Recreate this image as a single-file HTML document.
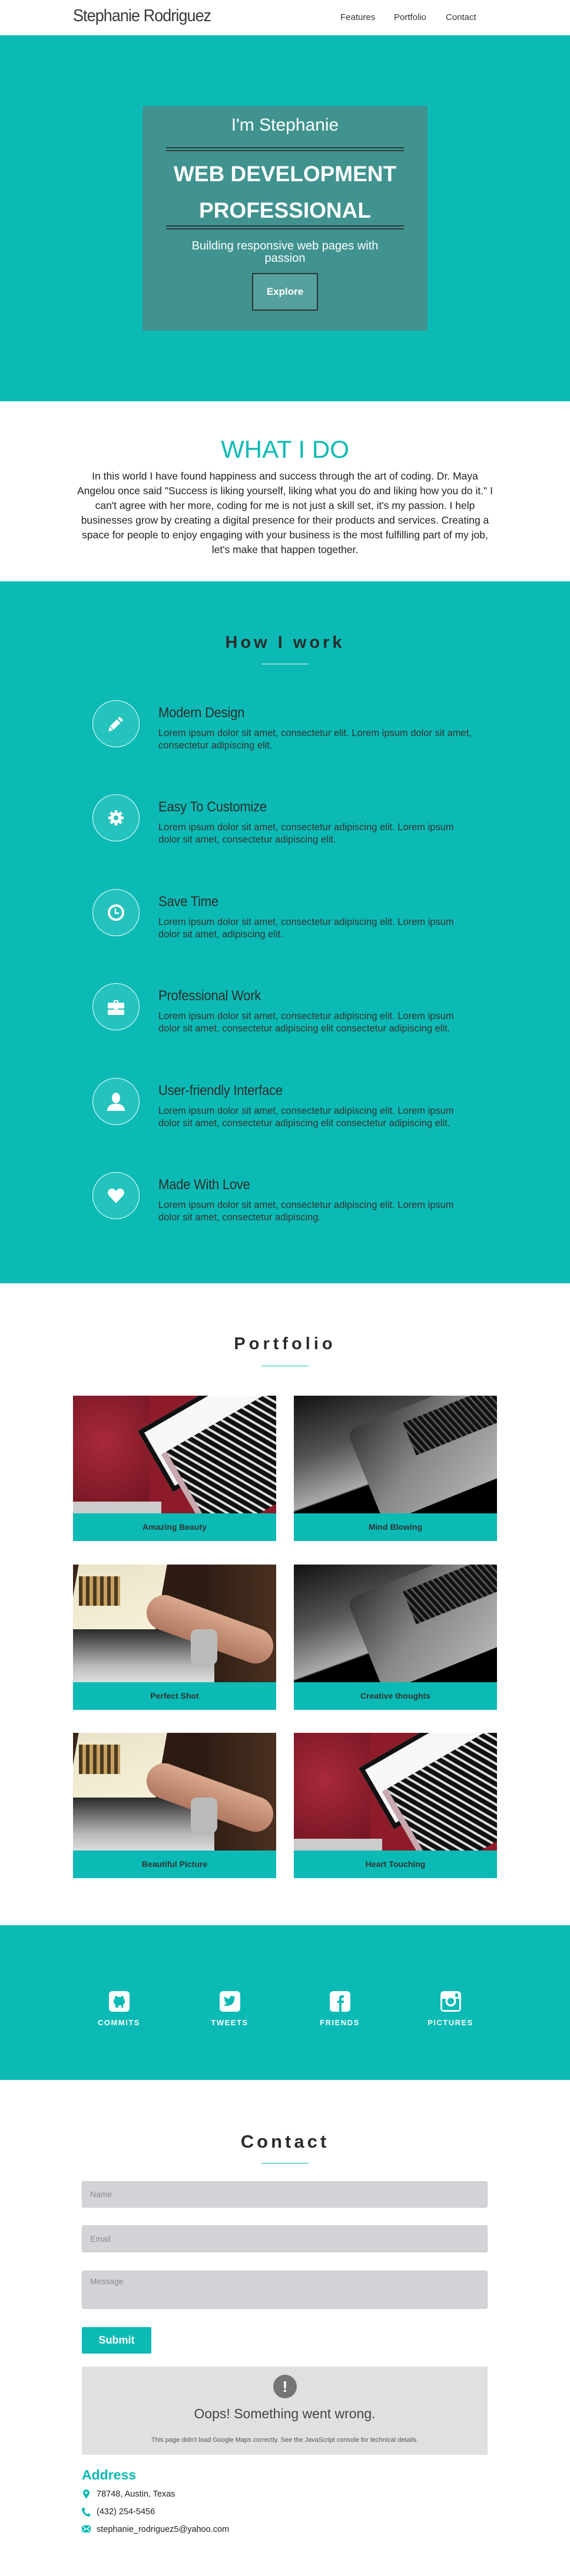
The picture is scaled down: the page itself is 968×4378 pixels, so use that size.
<!DOCTYPE html>
<html><head><meta charset="utf-8">
<style>
*{margin:0;padding:0;box-sizing:border-box}
body{width:968px;height:4378px;position:relative;background:#fff;font-family:"Liberation Sans",sans-serif;color:#333;overflow:hidden}
.a{position:absolute}
.teal{background:#0bbab5}
.c{text-align:center}
.nav a{position:absolute;top:21px;font-size:15px;color:#333;text-decoration:none}
.circ{position:absolute;left:157px;width:80px;height:80px;border-radius:50%;border:1.5px solid #fff;background:#24c3be;display:flex;align-items:center;justify-content:center}
.it h3{position:absolute;left:269px;font-weight:normal;font-size:24px;color:#2d2d2d;letter-spacing:-0.3px;transform:scaleX(.92);transform-origin:left}
.it p{position:absolute;left:269px;width:600px;font-size:16.5px;line-height:20.5px;color:#333;white-space:nowrap}
.card{position:absolute;width:345px;height:247px}
.card .img{height:200px;overflow:hidden;position:relative}
.card .cap{height:47px;background:#0bbab5;text-align:center;line-height:47px;font-size:14px;font-weight:bold;color:#333}
.soc{position:absolute;top:3384px;width:120px;text-align:center}
.soc svg{display:block;margin:0 auto}
.soc div{margin-top:11px;font-size:13px;font-weight:bold;color:#fff;letter-spacing:1.5px}
.inp{position:absolute;left:139px;width:689px;background:#d3d4d7;border:1px solid #c6c7ca;border-radius:3px;font-size:14px;color:#8a8a8a;padding-left:13px}
.h2{position:absolute;left:0;width:968px;text-align:center;font-weight:bold;color:#2b2b2b}
</style></head><body>

<!-- NAV -->
<div class="a" style="left:0;top:0;width:968px;height:60px;background:#fff">
<div class="a" style="left:124px;top:11px;font-size:29px;font-weight:300;color:#3a3a3a;letter-spacing:-1px;transform:scaleX(.93);transform-origin:left">Stephanie Rodriguez</div>
<div class="nav"><a style="left:578px">Features</a><a style="left:669px">Portfolio</a><a style="left:757px">Contact</a></div>
</div>

<!-- HERO -->
<div class="a teal" style="left:0;top:60px;width:968px;height:622px"></div>
<div class="a" style="left:242px;top:180px;width:484px;height:382px;background:#40938f"></div>
<div class="a c" style="left:242px;top:196px;width:484px;font-size:30px;color:#fff">I'm Stephanie</div>
<div class="a" style="left:282px;top:250px;width:404px;height:7px;border-top:2px solid #2e3b3a;border-bottom:2px solid #2e3b3a"></div>
<div class="a c" style="left:242px;top:265px;width:484px;font-size:37px;font-weight:bold;color:#fff;line-height:62px">WEB DEVELOPMENT<br>PROFESSIONAL</div>
<div class="a" style="left:282px;top:383px;width:404px;height:7px;border-top:2px solid #2e3b3a;border-bottom:2px solid #2e3b3a"></div>
<div class="a c" style="left:299px;top:408px;width:370px;font-size:20px;line-height:21px;color:#fff">Building responsive web pages with passion</div>
<div class="a c" style="left:428px;top:464px;width:112px;height:64px;border:2px solid #2e3433;background:#56a19d;color:#fff;font-size:17px;font-weight:bold;line-height:60px">Explore</div>

<!-- WHAT I DO -->
<div class="a c" style="left:0;top:740px;width:968px;font-size:42px;color:#0bbab5;font-weight:300">WHAT I DO</div>
<div class="a c" style="left:0;top:797px;width:968px;font-size:17.5px;line-height:25px;color:#222;white-space:nowrap">In this world I have found happiness and success through the art of coding. Dr. Maya<br>Angelou once said "Success is liking yourself, liking what you do and liking how you do it." I<br>can't agree with her more, coding for me is not just a skill set, it's my passion. I help<br>businesses grow by creating a digital presence for their products and services. Creating a<br>space for people to enjoy engaging with your business is the most fulfilling part of my job,<br>let's make that happen together.</div>

<!-- HOW I WORK -->
<div class="a teal" style="left:0;top:988px;width:968px;height:1193px"></div>
<div class="h2" style="top:1076px;font-size:29px;letter-spacing:5px">How I work</div>
<div class="a" style="left:444px;top:1128px;width:80px;height:1px;background:#fff"></div>

<div class="it">
<div class="circ" style="top:1190px"><svg width="32" height="32" viewBox="0 0 32 32"><path d="M22 4l6 6-3 3-6-6z M17.5 8.5l6 6L12 26l-6-6z M5 21l6 6-8 2z" fill="#fff"/></svg></div>
<h3 style="top:1198px">Modern Design</h3>
<p style="top:1236px">Lorem ipsum dolor sit amet, consectetur elit. Lorem ipsum dolor sit amet,<br>consectetur adipiscing elit.</p>

<div class="circ" style="top:1350px"><svg width="30" height="30" viewBox="0 0 30 30"><g fill="#fff"><circle cx="15" cy="15" r="9"/><rect x="12.5" y="2" width="5" height="26" rx="1"/><rect x="12.5" y="2" width="5" height="26" rx="1" transform="rotate(45 15 15)"/><rect x="12.5" y="2" width="5" height="26" rx="1" transform="rotate(90 15 15)"/><rect x="12.5" y="2" width="5" height="26" rx="1" transform="rotate(135 15 15)"/></g><circle cx="15" cy="15" r="4" fill="#24c3be"/></svg></div>
<h3 style="top:1358px">Easy To Customize</h3>
<p style="top:1396px">Lorem ipsum dolor sit amet, consectetur adipiscing elit. Lorem ipsum<br>dolor sit amet, consectetur adipiscing elit.</p>

<div class="circ" style="top:1511px"><svg width="32" height="32" viewBox="0 0 32 32"><circle cx="16" cy="16" r="12" fill="none" stroke="#fff" stroke-width="4"/><path d="M15 9v8h6" fill="none" stroke="#fff" stroke-width="2.5"/></svg></div>
<h3 style="top:1519px">Save Time</h3>
<p style="top:1557px">Lorem ipsum dolor sit amet, consectetur adipiscing elit. Lorem ipsum<br>dolor sit amet, adipiscing elit.</p>

<div class="circ" style="top:1671px"><svg width="36" height="36" viewBox="0 0 36 36"><path d="M14 7h8v4h-2V9h-4v2h-2z" fill="#fff"/><rect x="4" y="11" width="28" height="10" rx="2" fill="#fff"/><rect x="4" y="23" width="28" height="9" rx="2" fill="#fff"/><rect x="15" y="19" width="6" height="5" fill="#fff"/></svg></div>
<h3 style="top:1679px">Professional Work</h3>
<p style="top:1717px">Lorem ipsum dolor sit amet, consectetur adipiscing elit. Lorem ipsum<br>dolor sit amet, consectetur adipiscing elit consectetur adipiscing elit.</p>

<div class="circ" style="top:1832px"><svg width="36" height="36" viewBox="0 0 36 36"><ellipse cx="18" cy="12" rx="7" ry="9" fill="#fff"/><path d="M3 34c0-8 6-11 11-12h8c5 1 11 4 11 12z" fill="#fff"/></svg></div>
<h3 style="top:1840px">User-friendly Interface</h3>
<p style="top:1878px">Lorem ipsum dolor sit amet, consectetur adipiscing elit. Lorem ipsum<br>dolor sit amet, consectetur adipiscing elit consectetur adipiscing elit.</p>

<div class="circ" style="top:1992px"><svg width="32" height="32" viewBox="0 0 32 32"><path d="M16 29L4 16C0 11 3 4 9 4c3 0 5 2 7 4 2-2 4-4 7-4 6 0 9 7 5 12z" fill="#fff"/></svg></div>
<h3 style="top:2000px">Made With Love</h3>
<p style="top:2038px">Lorem ipsum dolor sit amet, consectetur adipiscing elit. Lorem ipsum<br>dolor sit amet, consectetur adipiscing.</p>
</div>

<!-- PORTFOLIO -->
<div class="h2" style="top:2268px;font-size:29px;letter-spacing:6px">Portfolio</div>
<div class="a" style="left:444px;top:2321px;width:80px;height:1px;background:#0bbab5"></div>

<div class="card" style="left:124px;top:2372px"><div class="img" style="background:#8e1b2a">
<div class="a" style="left:0;top:0;width:130px;height:200px;background:radial-gradient(circle at 40% 40%,#a8293a,#6d1320)"></div>
<div class="a" style="left:110px;top:60px;width:300px;height:120px;background:#f7f7f7;border:8px solid #111;transform:rotate(-30deg);transform-origin:left top"></div>
<div class="a" style="left:150px;top:100px;width:260px;height:170px;background:repeating-linear-gradient(60deg,#111 0 8px,#ddd 8px 12px),#111;transform:rotate(-30deg);transform-origin:left top;border-left:10px solid #c9a9ae"></div>
<div class="a" style="left:0;top:180px;width:150px;height:20px;background:#ccc"></div></div><div class="cap">Amazing Beauty</div></div>

<div class="card" style="left:499px;top:2372px"><div class="img" style="background:linear-gradient(160deg,#111 0%,#555 35%,#aaa 60%,#000 61%,#000 100%)">
<div class="a" style="left:90px;top:60px;width:330px;height:170px;background:linear-gradient(150deg,#333 0%,#888 40%,#c8c8c8 100%);border-radius:16px;transform:rotate(-22deg);transform-origin:left top"></div>
<div class="a" style="left:190px;top:10px;width:180px;height:60px;background:repeating-linear-gradient(70deg,#111 0 6px,#555 6px 9px);transform:rotate(-22deg)"></div></div><div class="cap">Mind Blowing</div></div>

<div class="card" style="left:124px;top:2659px"><div class="img" style="background:linear-gradient(90deg,#3a2418,#2a1a12 60%,#4a3020)">
<div class="a" style="left:0;top:0;width:150px;height:110px;background:linear-gradient(160deg,#e8e4c8,#f6f0d8);transform:skewX(-10deg)"></div>
<div class="a" style="left:10px;top:20px;width:70px;height:50px;background:repeating-linear-gradient(90deg,#4a3a20 0 6px,#c8a060 6px 12px)"></div>
<div class="a" style="left:0;top:110px;width:240px;height:90px;background:linear-gradient(180deg,#2a2a2a,#bbb 70%,#ddd)"></div>
<div class="a" style="left:120px;top:80px;width:225px;height:60px;background:linear-gradient(180deg,#d9a88c,#b07860);border-radius:30px;transform:rotate(20deg)"></div>
<div class="a" style="left:200px;top:110px;width:45px;height:60px;background:#bbb;border-radius:10px"></div></div><div class="cap">Perfect Shot</div></div>

<div class="card" style="left:499px;top:2659px"><div class="img" style="background:linear-gradient(160deg,#111 0%,#555 35%,#aaa 60%,#000 61%,#000 100%)">
<div class="a" style="left:90px;top:60px;width:330px;height:170px;background:linear-gradient(150deg,#333 0%,#888 40%,#c8c8c8 100%);border-radius:16px;transform:rotate(-22deg);transform-origin:left top"></div>
<div class="a" style="left:190px;top:10px;width:180px;height:60px;background:repeating-linear-gradient(70deg,#111 0 6px,#555 6px 9px);transform:rotate(-22deg)"></div></div><div class="cap">Creative thoughts</div></div>

<div class="card" style="left:124px;top:2945px"><div class="img" style="background:linear-gradient(90deg,#3a2418,#2a1a12 60%,#4a3020)">
<div class="a" style="left:0;top:0;width:150px;height:110px;background:linear-gradient(160deg,#e8e4c8,#f6f0d8);transform:skewX(-10deg)"></div>
<div class="a" style="left:10px;top:20px;width:70px;height:50px;background:repeating-linear-gradient(90deg,#4a3a20 0 6px,#c8a060 6px 12px)"></div>
<div class="a" style="left:0;top:110px;width:240px;height:90px;background:linear-gradient(180deg,#2a2a2a,#bbb 70%,#ddd)"></div>
<div class="a" style="left:120px;top:80px;width:225px;height:60px;background:linear-gradient(180deg,#d9a88c,#b07860);border-radius:30px;transform:rotate(20deg)"></div>
<div class="a" style="left:200px;top:110px;width:45px;height:60px;background:#bbb;border-radius:10px"></div></div><div class="cap">Beautiful Picture</div></div>

<div class="card" style="left:499px;top:2945px"><div class="img" style="background:#8e1b2a">
<div class="a" style="left:0;top:0;width:130px;height:200px;background:radial-gradient(circle at 40% 40%,#a8293a,#6d1320)"></div>
<div class="a" style="left:110px;top:60px;width:300px;height:120px;background:#f7f7f7;border:8px solid #111;transform:rotate(-30deg);transform-origin:left top"></div>
<div class="a" style="left:150px;top:100px;width:260px;height:170px;background:repeating-linear-gradient(60deg,#111 0 8px,#ddd 8px 12px),#111;transform:rotate(-30deg);transform-origin:left top;border-left:10px solid #c9a9ae"></div>
<div class="a" style="left:0;top:180px;width:150px;height:20px;background:#ccc"></div></div><div class="cap">Heart Touching</div></div>

<!-- SOCIAL -->
<div class="a teal" style="left:0;top:3272px;width:968px;height:263px"></div>
<div class="soc" style="left:142px"><svg width="35" height="35" viewBox="0 0 35 35"><rect width="35" height="35" rx="6" fill="#fff"/><path d="M11 28v-5c-2-1-3-3-3-6 0-2 1-3 2-4 0-2 0-3 1-5 2 0 3 1 4 2h5c1-1 2-2 4-2 1 2 1 3 1 5 1 1 2 2 2 4 0 3-1 5-3 6v5h-3v-4h-5v4z M5 22c3 0 3 3 6 3" fill="#0bbab5"/></svg><div>COMMITS</div></div>
<div class="soc" style="left:330px"><svg width="35" height="35" viewBox="0 0 35 35"><rect width="35" height="35" rx="6" fill="#fff"/><path d="M27 10c-1 1-2 1-3 1 1-1 2-2 2-3-1 1-2 1-3 1-2-2-6-1-6 3v1c-4 0-7-2-9-4-1 2 0 5 2 6-1 0-1 0-2-1 0 2 1 4 3 4h-2c1 2 2 3 4 3-2 1-4 2-7 2 9 5 19 0 19-10z" fill="#0bbab5"/></svg><div>TWEETS</div></div>
<div class="soc" style="left:517px"><svg width="35" height="35" viewBox="0 0 35 35"><rect width="35" height="35" rx="6" fill="#fff"/><path d="M20 35V20h4v-4h-4v-3c0-1 1-2 2-2h2V7h-3c-4 0-5 2-5 5v4h-3v4h3v15z" fill="#0bbab5"/></svg><div>FRIENDS</div></div>
<div class="soc" style="left:705px"><svg width="35" height="35" viewBox="0 0 35 35"><rect width="35" height="35" rx="6" fill="#fff"/><rect x="3" y="13" width="29" height="19" fill="#0bbab5"/><circle cx="17.5" cy="17" r="9" fill="#fff"/><circle cx="17.5" cy="17" r="5.5" fill="#0bbab5"/><rect x="25" y="4" width="5" height="6" rx="1" fill="#0bbab5"/></svg><div>PICTURES</div></div>

<!-- CONTACT -->
<div class="h2" style="top:3622px;font-size:31px;letter-spacing:5px">Contact</div>
<div class="a" style="left:444px;top:3676px;width:80px;height:1px;background:#0bbab5"></div>
<div class="inp" style="top:3707px;height:45px;line-height:43px">Name</div>
<div class="inp" style="top:3782px;height:46px;line-height:44px">Email</div>
<div class="inp" style="top:3859px;height:65px;padding-top:9px">Message</div>
<div class="a c" style="left:139px;top:3955px;width:118px;height:45px;background:#0bbab5;border-radius:2px;color:#fff;font-size:18px;font-weight:bold;line-height:45px">Submit</div>

<div class="a" style="left:139px;top:4022px;width:689px;height:150px;background:#e0e0e0"></div>
<div class="a c" style="left:464px;top:4036px;width:40px;height:40px;border-radius:50%;background:#757575;color:#fff;font-weight:bold;font-size:26px;line-height:40px">!</div>
<div class="a c" style="left:139px;top:4089px;width:689px;font-size:23px;color:#444">Oops! Something went wrong.</div>
<div class="a c" style="left:139px;top:4141px;width:689px;font-size:11px;color:#555">This page didn't load Google Maps correctly. See the JavaScript console for technical details.</div>

<div class="a" style="left:139px;top:4193px;font-size:23px;font-weight:bold;color:#0bbab5">Address</div>
<svg class="a" style="left:141px;top:4231px" width="11" height="16" viewBox="0 0 11 16"><path d="M5.5 16C2 10 0 8 0 5.5a5.5 5.5 0 0 1 11 0C11 8 9 10 5.5 16z" fill="#0bbab5"/><circle cx="5.5" cy="5.5" r="2" fill="#fff"/></svg>
<div class="a" style="left:164px;top:4231px;font-size:14.5px;color:#222">78748, Austin, Texas</div>
<svg class="a" style="left:139px;top:4261px" width="15" height="16" viewBox="0 0 15 16"><path d="M3 0l3 4-2 2c1 3 3 5 5 6l2-2 4 3-2 3C6 16 0 9 0 3z" fill="#0bbab5"/></svg>
<div class="a" style="left:164px;top:4261px;font-size:14.5px;color:#222">(432) 254-5456</div>
<svg class="a" style="left:139px;top:4292px" width="15" height="12" viewBox="0 0 15 12"><rect width="15" height="12" fill="#0bbab5"/><path d="M0 0l7.5 7L15 0M0 12l5.5-6M15 12l-5.5-6" stroke="#fff" stroke-width="1.3" fill="none"/></svg>
<div class="a" style="left:164px;top:4291px;font-size:14.5px;color:#222">stephanie_rodriguez5@yahoo.com</div>

</body></html>
